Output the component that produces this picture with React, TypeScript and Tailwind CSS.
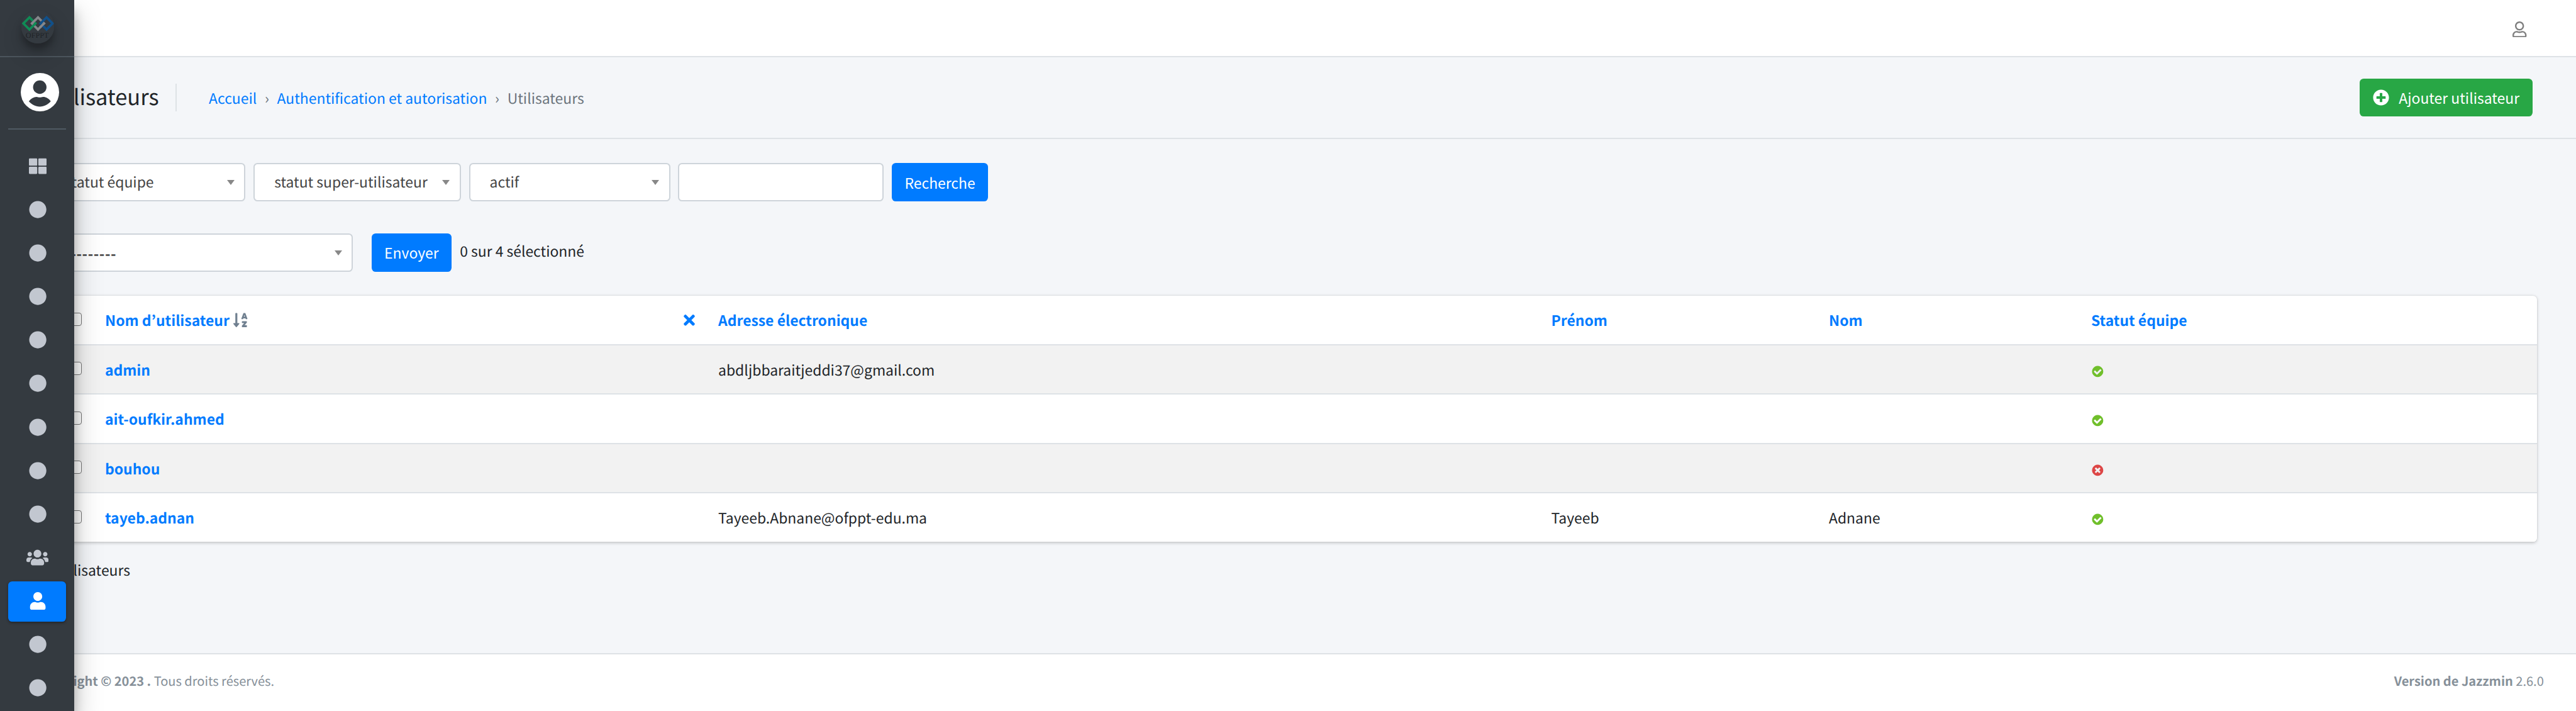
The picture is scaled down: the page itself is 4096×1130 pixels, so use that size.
import React from "react";
import { FaCircle, FaPlusCircle, FaRegUser, FaSortAlphaDown, FaThLarge, FaTimes, FaUser, FaUsers } from "react-icons/fa";

const users = [
  { name: "admin", email: "abdljbbaraitjeddi37@gmail.com", first: "", last: "", staff: true },
  { name: "ait-oufkir.ahmed", email: "", first: "", last: "", staff: true },
  { name: "bouhou", email: "", first: "", last: "", staff: false },
  { name: "tayeb.adnan", email: "Tayeeb.Abnane@ofppt-edu.ma", first: "Tayeeb", last: "Adnane", staff: true },
];

const navIcons = ["grid", "dot", "dot", "dot", "dot", "dot", "dot", "dot", "dot", "users", "user", "dot", "dot"];

const ROW = "grid grid-cols-[104.6px_975px_1324.5px_441.5px_417px_1fr] items-center";

function StatusIcon({ ok }: { ok: boolean }) {
  return (
    <svg className="mt-[7px] size-[20.8px]" viewBox="0 0 1792 1792">
      {ok ? (
        <path fill="#70bf2b" d="M1412 734q0-28-18-46l-91-90q-19-19-45-19t-45 19l-408 407-226-226q-19-19-45-19t-45 19l-91 90q-18 18-18 46 0 27 18 45l362 362q19 19 45 19 27 0 46-19l543-543q18-18 18-45zm252 162q0 209-103 385.5t-279.5 279.5-385.5 103-385.5-103-279.5-279.5-103-385.5 103-385.5 279.5-279.5 385.5-103 385.5 103 279.5 279.5 103 385.5z" />
      ) : (
        <path fill="#dd4646" d="M1277 1122q0-26-19-45l-181-181 181-181q19-19 19-45 0-27-19-46l-90-90q-19-19-46-19-26 0-45 19l-181 181-181-181q-19-19-45-19-27 0-46 19l-90 90q-19 19-19 46 0 26 19 45l181 181-181 181q-19 19-19 45 0 27 19 46l90 90q19 19 46 19 26 0 45-19l181-181 181 181q19 19 45 19 27 0 46-19l90-90q19-19 19-46zm387-226q0 209-103 385.5t-279.5 279.5-385.5 103-385.5-103-279.5-279.5-103-385.5 103-385.5 279.5-279.5 385.5-103 385.5 103 279.5 279.5 103 385.5z" />
      )}
    </svg>
  );
}

function Checkbox() {
  return <span className="mb-[2px] ml-[46.5px] block size-[21px] rounded-[4px] border-[1.6px] border-[#767676] bg-white" />;
}

function Select({ label, className }: { label: React.ReactNode; className: string }) {
  return (
    <div className={`flex h-[60.8px] shrink-0 items-center justify-between rounded-[6.4px] border-2 border-[#ced4da] bg-white pr-[15.5px] text-[#444] ${className}`}>
      <span className="pb-[3px]">{label}</span>
      <span className="h-0 w-0 border-x-[6.4px] border-t-[8px] border-x-transparent border-t-[#888]" />
    </div>
  );
}

function Logo() {
  return (
    <div className="mt-[16px] ml-[33.6px] size-[52.8px] shrink-0 overflow-visible rounded-full shadow-[0_16px_32px_rgba(0,0,0,0.19),0_9.6px_9.6px_rgba(0,0,0,0.23)]">
      <svg className="size-full rounded-full bg-[#343a40]" viewBox="42 20 66 66">
        <g fill="none" strokeWidth="4.6">
          <path stroke="#85888b" d="M75 34.5 87 46.5 75 58.5 63 46.5Z" />
          <path stroke="#0f8b55" d="M58 34.5 70 46.5 58 58.5 46 46.5Z" />
          <path stroke="#10508a" d="M92 34.5 104 46.5 92 58.5 80 46.5Z" />
          <path stroke="#85888b" d="M62 47.5 71 38.5M79 54.5 88.5 45" />
        </g>
        <text x="50.5" y="75" fontSize="14.5" textLength="46" lengthAdjust="spacingAndGlyphs" fontFamily="Liberation Serif, serif" fill="#1f2327">OFPPT</text>
      </svg>
    </div>
  );
}

function Sidebar() {
  return (
    <aside className="absolute inset-y-0 left-0 flex w-[118px] flex-col overflow-visible bg-[#343a40] shadow-[0_22.4px_44.8px_rgba(0,0,0,0.25),0_16px_16px_rgba(0,0,0,0.22)]">
      <div className="flex h-[91.2px] shrink-0 border-b-2 border-[#4b545c]">
        <Logo />
      </div>
      <div className="mx-[12.8px] h-[115.2px] shrink-0 border-b-2 border-[#4f5962] pt-[25px] pl-[20px]">
        <svg className="size-[61px]" viewBox="0 0 76 76">
          <circle cx="38" cy="38" r="38" fill="#fff" />
          <circle cx="37.7" cy="28" r="13.3" fill="#343a40" />
          <path fill="#343a40" d="M16 56C21 50 26 47.3 31 47.3C34 47.3 35 48.3 37.7 48.3C40.4 48.3 41.4 47.3 44.4 47.3C50 47.3 55 50 59.5 56C54.5 62 46.5 66.5 37.7 66.5C29 66.5 21 62 16 56Z" />
        </svg>
      </div>
      <nav className="mt-[26.4px] flex flex-col gap-[5.12px] px-[12.8px]">
        {navIcons.map((icon, i) => (
          <span
            key={i}
            className={`flex h-[64px] shrink-0 items-center justify-center rounded-[6.4px] pb-[1.6px] pl-[1.6px] text-[28.2px] ${
              icon === "user"
                ? "bg-[#007bff] text-white shadow-[0_1.6px_4.8px_rgba(0,0,0,0.12),0_1.6px_3.2px_rgba(0,0,0,0.24)]"
                : "text-[#c2c7d0]"
            }`}
          >
            {icon === "grid" && <FaThLarge />}
            {icon === "dot" && <FaCircle />}
            {icon === "users" && <FaUsers className="h-[28.2px] w-[35.2px]" />}
            {icon === "user" && <FaUser />}
          </span>
        ))}
      </nav>
    </aside>
  );
}

export default function App() {
  return (
    <div className="relative flex h-[1130px] w-[4096px] flex-col overflow-hidden bg-[#f4f6f9] font-['Noto_Sans_CJK_KR','Noto_Sans',sans-serif] text-[22.92px] leading-[38px] whitespace-nowrap text-[#212529] [text-rendering:geometricPrecision]">
      <header className="flex h-[91.2px] shrink-0 items-start justify-end border-b-2 border-[#dee2e6] bg-white pt-[33.6px] pr-[78.2px] text-[#7f7f7f]">
        <FaRegUser className="h-[25.6px] w-[22.4px]" />
      </header>

      <section className="flex h-[129.6px] shrink-0 items-center border-b-2 border-[#dee2e6] pr-[68.8px]">
        <h1 className="flex w-[252.5px] justify-end pb-[5px] text-[34.38px]">Utilisateurs</h1>
        <div className="ml-[26px] h-[44.8px] w-[2px] bg-[#dee2e6]" />
        <nav className="ml-[51.6px] flex items-center text-[#007bff]">
          <a>Accueil</a>
          <span className="w-[32.3px] text-center text-[#6c757d]">›</span>
          <a>Authentification et autorisation</a>
          <span className="w-[32.3px] text-center text-[#6c757d]">›</span>
          <span className="text-[#6c757d]">Utilisateurs</span>
        </nav>
        <button className="ml-auto flex h-[60.8px] w-[275.2px] items-center rounded-[6.4px] bg-[#28a745] pl-[20.8px] text-white">
          <FaPlusCircle className="mr-[15.5px] size-[26px]" />
          Ajouter utilisateur
        </button>
      </section>

      <section className="mt-[38.4px] flex shrink-0 gap-[12.8px] pl-[62.4px]">
        <Select label="statut équipe" className="w-[328px] pl-[39px]" />
        <Select label="statut super-utilisateur" className="w-[329.6px] pl-[31px]" />
        <Select label="actif" className="w-[320px] pl-[31px]" />
        <div className="h-[60.8px] w-[326.6px] rounded-[6.4px] border-2 border-[#ced4da] bg-white" />
        <button className="flex h-[60.8px] w-[153.6px] items-center justify-center rounded-[6.4px] bg-[#007bff] text-white">Recherche</button>
      </section>

      <section className="mt-[51.2px] flex shrink-0 items-center pl-[62.4px]">
        <Select label={<b className="block pt-[4px] tracking-[0.6px]">---------</b>} className="w-[498.8px] pl-[39px]" />
        <button className="ml-[29.4px] flex h-[60.8px] w-[127.6px] items-center justify-center rounded-[6.4px] bg-[#007bff] pb-[1px] text-white">Envoyer</button>
        <span className="ml-[13px] pb-[8px]">0 sur 4 sélectionné</span>
      </section>

      <section className="mt-[38.4px] mr-[62.4px] ml-[62.4px] shrink-0 overflow-hidden rounded-[6.4px] bg-white shadow-[0_0_1.6px_rgba(0,0,0,0.125),0_1.6px_4.8px_rgba(0,0,0,0.2)]">
        <div className={`${ROW} h-[78.4px] border-b-2 border-[#dee2e6] font-bold text-[#007bff]`}>
          <Checkbox />
          <div className="flex items-center pr-[37.4px]">
            <span className="pb-[1px]">Nom d’utilisateur</span>
            <FaSortAlphaDown className="ml-[6.5px] h-[25.6px] w-[22.4px] text-[#708090]" />
            <FaTimes className="ml-auto h-[25.6px] w-[18px]" />
          </div>
          <span className="pb-[1px]">Adresse électronique</span>
          <span className="pb-[1px]">Prénom</span>
          <span className="pb-[1px]">Nom</span>
          <span className="pb-[1px]">Statut équipe</span>
        </div>
        {users.map((u, i) => (
          <div key={u.name} className={`${ROW} ${i % 2 === 0 ? "bg-[#f2f2f2]" : "bg-white"} ${i < 3 ? "h-[78.4px] border-b-2 border-[#dee2e6]" : "h-[76.8px]"}`}>
            <Checkbox />
            <a className="font-bold text-[#007bff]">{u.name}</a>
            <span>{u.email}</span>
            <span>{u.first}</span>
            <span>{u.last}</span>
            <StatusIcon ok={u.staff} />
          </div>
        ))}
      </section>

      <p className="mt-[25.6px] flex w-[207px] shrink-0 justify-end">4 utilisateurs</p>

      <footer className="mt-auto flex h-[91.6px] shrink-0 items-center border-t-2 border-[#dee2e6] bg-white pr-[51.2px] pb-[6px] text-[20.05px] text-[#869099]">
        <div className="flex w-[436px] justify-end">
          <b>Copyright © 2023 .</b>
          <span>&nbsp;Tous droits réservés.</span>
        </div>
        <div className="ml-auto">
          <b>Version de Jazzmin</b> 2.6.0
        </div>
      </footer>

      <Sidebar />
    </div>
  );
}
